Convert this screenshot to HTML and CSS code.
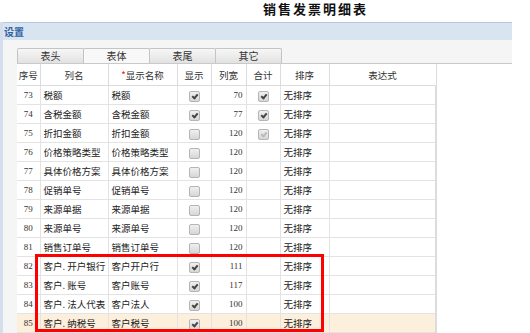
FILE: index.html
```html
<!DOCTYPE html>
<html lang="zh-CN">
<head>
  <title>销售发票明细表</title>
  <meta charset="utf-8">
  <link rel="stylesheet" href="styles.css">
</head>
<body>
    <div class="page-title">销售发票明细表</div>
    <div class="panel">
        <div class="panel-head">设置</div>
        <div class="panel-body">
            <ul class="tabs">
                <li>表头</li>
                <li class="active">表体</li>
                <li>表尾</li>
                <li>其它</li>
            </ul>
            <div class="grid-wrap">
                <table class="grid">
                    <colgroup>
                        <col class="c-no"><col class="c-name"><col class="c-label"><col class="c-show">
                        <col class="c-width"><col class="c-sum"><col class="c-sort"><col class="c-expr">
                    </colgroup>
                    <thead>
                        <tr>
                            <th>序号</th><th>列名</th><th><span class="req">*</span>显示名称</th><th>显示</th>
                            <th>列宽</th><th>合计</th><th>排序</th><th>表达式</th>
                        </tr>
                    </thead>
                    <tbody>
                        <tr><td class="num">73</td><td>税额</td><td>税额</td><td class="mid"><span class="chk on"></span></td><td class="w">70</td><td class="mid"><span class="chk on"></span></td><td>无排序</td><td></td></tr>
                        <tr><td class="num">74</td><td>含税金额</td><td>含税金额</td><td class="mid"><span class="chk on"></span></td><td class="w">77</td><td class="mid"><span class="chk on"></span></td><td>无排序</td><td></td></tr>
                        <tr><td class="num">75</td><td>折扣金额</td><td>折扣金额</td><td class="mid"><span class="chk"></span></td><td class="w">120</td><td class="mid"><span class="chk on dim"></span></td><td>无排序</td><td></td></tr>
                        <tr><td class="num">76</td><td>价格策略类型</td><td>价格策略类型</td><td class="mid"><span class="chk"></span></td><td class="w">120</td><td></td><td>无排序</td><td></td></tr>
                        <tr><td class="num">77</td><td>具体价格方案</td><td>具体价格方案</td><td class="mid"><span class="chk"></span></td><td class="w">120</td><td></td><td>无排序</td><td></td></tr>
                        <tr><td class="num">78</td><td>促销单号</td><td>促销单号</td><td class="mid"><span class="chk"></span></td><td class="w">120</td><td></td><td>无排序</td><td></td></tr>
                        <tr><td class="num">79</td><td>来源单据</td><td>来源单据</td><td class="mid"><span class="chk"></span></td><td class="w">120</td><td></td><td>无排序</td><td></td></tr>
                        <tr><td class="num">80</td><td>来源单号</td><td>来源单号</td><td class="mid"><span class="chk"></span></td><td class="w">120</td><td></td><td>无排序</td><td></td></tr>
                        <tr><td class="num">81</td><td>销售订单号</td><td>销售订单号</td><td class="mid"><span class="chk"></span></td><td class="w">120</td><td></td><td>无排序</td><td></td></tr>
                        <tr><td class="num">82</td><td>客户. 开户银行</td><td>客户开户行</td><td class="mid"><span class="chk on"></span></td><td class="w">111</td><td></td><td>无排序</td><td></td></tr>
                        <tr><td class="num">83</td><td>客户. 账号</td><td>客户账号</td><td class="mid"><span class="chk on"></span></td><td class="w">117</td><td></td><td>无排序</td><td></td></tr>
                        <tr><td class="num">84</td><td>客户. 法人代表</td><td>客户法人</td><td class="mid"><span class="chk on"></span></td><td class="w">100</td><td></td><td>无排序</td><td></td></tr>
                        <tr class="current"><td class="num">85</td><td>客户. 纳税号</td><td>客户税号</td><td class="mid"><span class="chk on"></span></td><td class="w">100</td><td></td><td>无排序</td><td></td></tr>
                    </tbody>
                </table>
                <div class="mark-box"></div>
            </div>
        </div>
    </div>
</body>
</html>
```

FILE: styles.css
```css
body {
    margin: 0;
    background: #fff;
    font-family: "Noto Sans CJK SC", "Liberation Sans", sans-serif;
    color: #222;
}
.page-title {
    height: 20px;
    padding: 2px 0 0 263px;
    font-size: 13px;
    font-weight: bold;
    letter-spacing: 2px;
    line-height: 14px;
    white-space: nowrap;
    color: #111;
}
.panel {
    width: 512px;
    border-left: 3px solid #d3dfec;
    box-sizing: border-box;
}
.panel-head {
    height: 18px;
    line-height: 17px;
    padding-left: 1px;
    font-size: 10px;
    font-weight: bold;
    color: #2f63a0;
    background: #d9e4f1;
    border-top: 1px solid #b7c8dc;
    box-sizing: border-box;
}
.panel-body {
    background: #f5f5f5;
    padding-left: 14px;
}
.tabs {
    display: flex;
    margin: 0;
    padding: 8px 0 0 0;
    list-style: none;
    border-bottom: 1px solid #c9c9c9;
}
.tabs li {
    width: 65px;
    height: 14px;
    line-height: 14px;
    font-size: 10px;
    text-align: center;
    color: #333;
    border: 1px solid #c4c4c4;
    border-bottom: 0;
    border-radius: 2px 2px 0 0;
    margin-right: -1px;
    background: linear-gradient(#f7f7f7, #e2e2e2);
}
.tabs li.active {
    background: #f8f8f8;
}
.grid-wrap {
    position: relative;
    background: #fff;
    height: 270px;
    border-bottom: 1px solid #d5d5d5;
}
.grid {
    border-collapse: collapse;
    table-layout: fixed;
    width: 419px;
    font-size: 9.5px;
}
.c-no { width: 23px; }
.c-name { width: 68px; }
.c-label { width: 69px; }
.c-show { width: 34px; }
.c-width { width: 35px; }
.c-sum { width: 34px; }
.c-sort { width: 49px; }
.c-expr { width: 107px; }
.grid th {
    height: 21px;
    font-weight: normal;
    color: #333;
    text-align: center;
    border: 1px solid #dcdcdc;
    border-top: 0;
    padding: 0;
}
.grid th:first-child, .grid td:first-child {
    border-left: 0;
}
.grid td {
    height: 18px;
    padding: 0 0 0 3px;
    border: 1px solid #e3e3e3;
    white-space: nowrap;
    overflow: hidden;
}
.grid td:last-child {
    border-right: 2px solid #dcdcdc;
}
.grid .num {
    text-align: center;
    padding: 0;
    font-family: "Liberation Serif", serif;
    font-size: 9px;
    color: #333;
}
.grid .w {
    text-align: right;
    padding: 0 3px 0 0;
    font-family: "Liberation Serif", serif;
    font-size: 9px;
    color: #333;
}
.grid .mid {
    text-align: center;
    padding: 0;
}
.req {
    color: #e00;
}
.grid tr.current td {
    background: #fcefdc;
}
.chk {
    display: inline-block;
    position: relative;
    width: 9px;
    height: 9px;
    vertical-align: middle;
    border: 1px solid #b5b5b5;
    border-radius: 2px;
    background: linear-gradient(#f0f0f0, #d6d6d6);
}
.chk.on::after {
    content: "";
    position: absolute;
    left: 3px;
    top: 1px;
    width: 2px;
    height: 4px;
    border: solid #444;
    border-width: 0 2px 2px 0;
    transform: rotate(40deg);
}
.chk.dim::after {
    border-color: #bbb;
}
.mark-box {
    position: absolute;
    left: 18px;
    top: 190px;
    width: 289px;
    height: 78px;
    border: 3px solid #f00;
    box-sizing: border-box;
}
```
